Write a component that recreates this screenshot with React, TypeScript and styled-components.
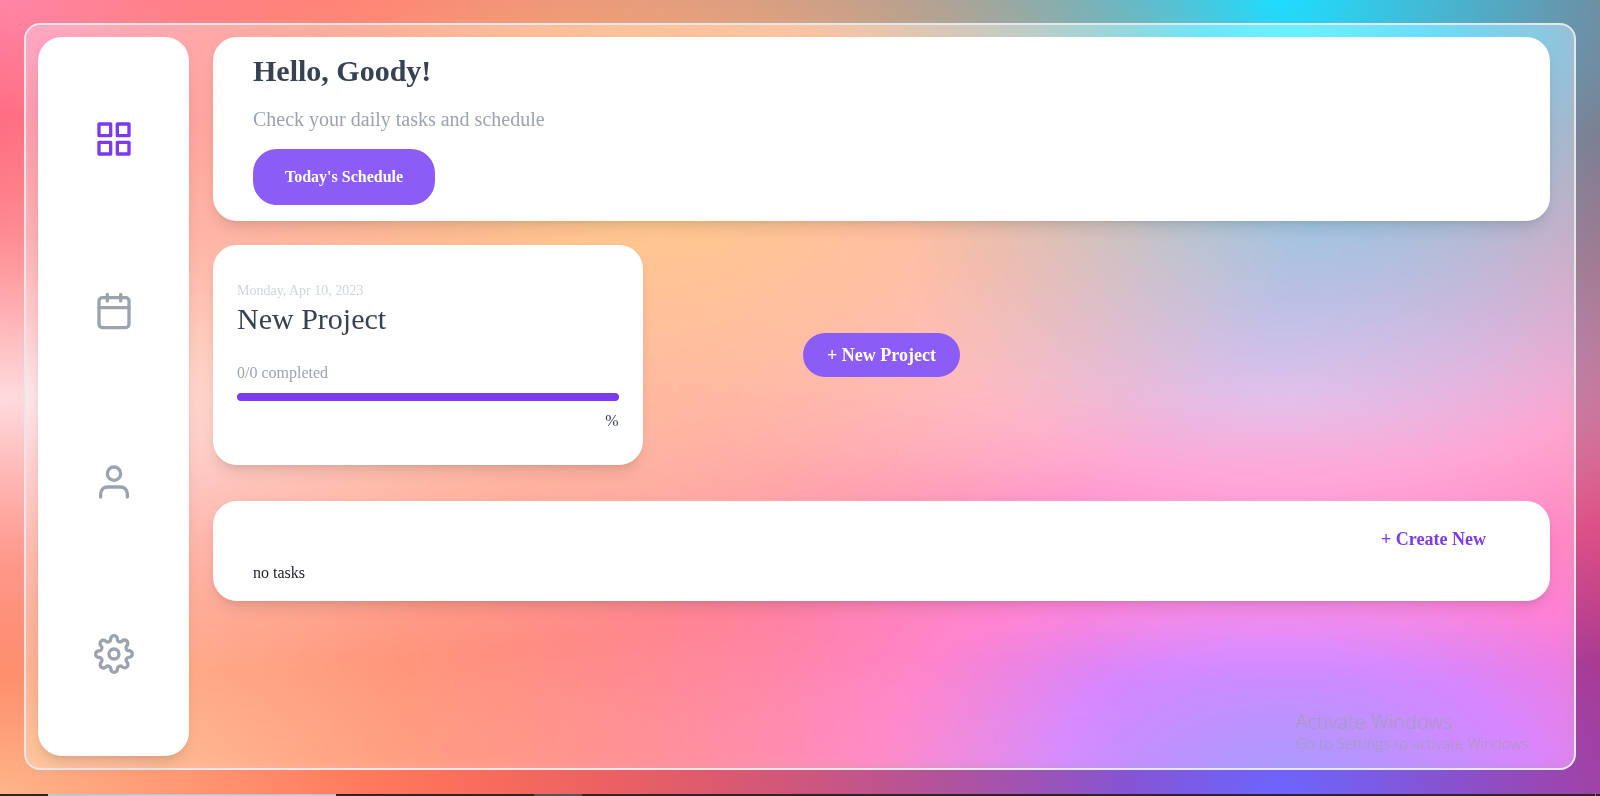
import React from "react";
import styled, { createGlobalStyle } from "styled-components";
import { FiCalendar, FiGrid, FiSettings, FiUser } from "react-icons/fi";

const GlobalStyle = createGlobalStyle`
  *, *::before, *::after { box-sizing: border-box; }
  body {
    margin: 0;
    font-family: "Liberation Serif", "Times New Roman", serif;
    font-size: 16px;
    line-height: 24px;
    color: #1f1f2b;
  }
  h1, h2, p { margin: 0; }
  button { font-family: inherit; border: 0; cursor: pointer; }
`;

const Screen = styled.div`
  position: relative;
  display: flex;
  flex-direction: column;
  min-height: 100vh;
  background-color: #ff0000;
  background-image:
    radial-gradient(at 40% 20%, hsl(28, 100%, 74%) 0px, transparent 50%),
    radial-gradient(at 80% 0%, hsl(189, 100%, 56%) 0px, transparent 50%),
    radial-gradient(at 0% 50%, hsl(355, 100%, 93%) 0px, transparent 50%),
    radial-gradient(at 80% 50%, hsl(340, 100%, 76%) 0px, transparent 50%),
    radial-gradient(at 0% 100%, hsl(22, 100%, 77%) 0px, transparent 50%),
    radial-gradient(at 80% 100%, hsl(242, 100%, 70%) 0px, transparent 50%),
    radial-gradient(at 0% 0%, hsl(343, 100%, 76%) 0px, transparent 50%);
`;

const Panel = styled.div`
  flex: 1;
  display: flex;
  gap: 24px;
  margin: 23px 24px 24px;
  padding: 12px 24px 12px 12px;
  border: 2px solid #e5e7eb;
  border-radius: 16px;
  background: rgba(255, 255, 255, 0.4);
  backdrop-filter: blur(8px) saturate(180%);
`;

const Card = styled.section`
  background: #fff;
  border-radius: 24px;
  box-shadow: 0 10px 15px -3px rgba(0, 0, 0, 0.1), 0 4px 6px -4px rgba(0, 0, 0, 0.1);
`;

const Sidebar = styled(Card).attrs({ as: "nav" })`
  flex: 0 0 151px;
  display: flex;
  flex-direction: column;
  align-items: center;
  justify-content: space-around;
  padding: 16px 0;
`;

const NavLink = styled.a<{ $active?: boolean }>`
  display: flex;
  color: ${(p) => (p.$active ? "#7c3aed" : "#9ca3af")};
`;

const Main = styled.main`
  flex: 1;
  min-width: 0;
`;

const Greeting = styled(Card)`
  display: flex;
  flex-direction: column;
  align-items: flex-start;
  gap: 16px;
  padding: 16px 40px;
`;

const Title = styled.h1`
  font-size: 30px;
  line-height: 36px;
  font-weight: 700;
  color: #374151;
`;

const Subtitle = styled.p`
  font-size: 20px;
  line-height: 28px;
  color: #9ca3af;
`;

const ScheduleButton = styled.button`
  padding: 16px 32px;
  border-radius: 24px;
  background: #8b5cf6;
  color: #fff;
  font-size: 16px;
  line-height: 24px;
  font-weight: 700;
`;

const Projects = styled.div`
  display: grid;
  grid-template-columns: repeat(3, 1fr);
  gap: 24px;
  margin: 24px 0 36px;
`;

const ProjectCard = styled(Card)`
  padding: 36px 24px 32px;
`;

const ProjectDate = styled.p`
  font-size: 14px;
  line-height: 20px;
  color: #d1d5db;
`;

const ProjectName = styled.h2`
  margin-bottom: 24px;
  font-size: 30px;
  line-height: 36px;
  font-weight: 400;
  color: #374151;
`;

const Completed = styled.p`
  color: #9ca3af;
`;

const ProgressTrack = styled.div`
  height: 8px;
  margin: 8px 0;
  border-radius: 4px;
  background: #7c3aed;
`;

const Percent = styled.p`
  text-align: right;
  color: #374151;
`;

const NewProjectButton = styled.button`
  place-self: center;
  padding: 8px 24px;
  border-radius: 24px;
  background: #8b5cf6;
  color: #fff;
  font-size: 18px;
  line-height: 28px;
  font-weight: 700;
`;

const Tasks = styled(Card)`
  display: flex;
  flex-direction: column;
  padding: 16px 40px;
`;

const CreateButton = styled.button`
  align-self: flex-end;
  padding: 8px 24px;
  background: transparent;
  color: #7c3aed;
  font-size: 18px;
  line-height: 28px;
  font-weight: 700;
`;

const Watermark = styled.div`
  position: absolute;
  right: 68px;
  bottom: 44px;
  font-family: "Open Sans", "Segoe UI", sans-serif;
  font-weight: 300;
  color: rgba(155, 160, 160, 0.75);
  pointer-events: none;
`;

const WatermarkTitle = styled.p`
  font-size: 20px;
  line-height: 24px;
`;

const WatermarkText = styled.p`
  font-size: 15px;
  line-height: 18px;
`;

const Taskbar = styled.div`
  display: flex;
  height: 2px;
  padding: 0 4px 0 48px;
  background: #2b2529;
`;

const SearchEdge = styled.div`
  flex: 0 0 288px;
  margin-right: 198px;
  background: #c4c8ce;
`;

const ActiveAppEdge = styled.div`
  flex: 0 0 48px;
  background: #4d5560;
`;

const DesktopEdge = styled.div`
  flex: 0 0 1px;
  margin-left: auto;
  background: #8a8790;
`;

const navItems = [
  { label: "Dashboard", Icon: FiGrid, active: true },
  { label: "Calendar", Icon: FiCalendar },
  { label: "Profile", Icon: FiUser },
  { label: "Settings", Icon: FiSettings },
];

export default function App() {
  return (
    <>
      <GlobalStyle />
      <Screen>
        <Panel>
          <Sidebar>
            {navItems.map(({ label, Icon, active }) => (
              <NavLink key={label} href="#" aria-label={label} $active={active}>
                <Icon size={40} />
              </NavLink>
            ))}
          </Sidebar>
          <Main>
            <Greeting>
              <Title>Hello, Goody!</Title>
              <Subtitle>Check your daily tasks and schedule</Subtitle>
              <ScheduleButton>Today's Schedule</ScheduleButton>
            </Greeting>
            <Projects>
              <ProjectCard>
                <ProjectDate>Monday, Apr 10, 2023</ProjectDate>
                <ProjectName>New Project</ProjectName>
                <Completed>0/0 completed</Completed>
                <ProgressTrack />
                <Percent>%</Percent>
              </ProjectCard>
              <NewProjectButton>+ New Project</NewProjectButton>
            </Projects>
            <Tasks>
              <CreateButton>+ Create New</CreateButton>
              <p>no tasks</p>
            </Tasks>
          </Main>
        </Panel>
        <Taskbar>
          <SearchEdge />
          <ActiveAppEdge />
          <DesktopEdge />
        </Taskbar>
        <Watermark>
          <WatermarkTitle>Activate Windows</WatermarkTitle>
          <WatermarkText>Go to Settings to activate Windows.</WatermarkText>
        </Watermark>
      </Screen>
    </>
  );
}
